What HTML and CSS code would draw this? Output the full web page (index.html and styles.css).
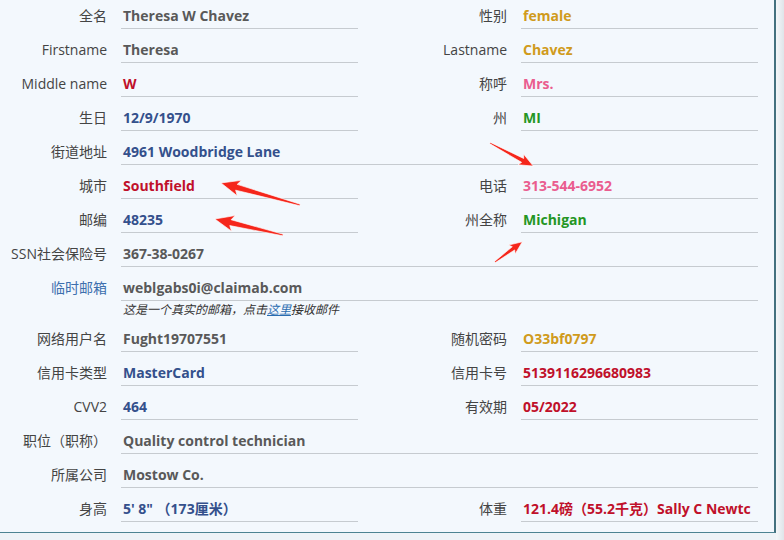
FILE: index.html
```html
<!DOCTYPE html>
<html lang="zh-CN">
<head>
<meta charset="utf-8">
<title>Profile</title>
<link rel="stylesheet" href="styles.css">
</head>
<body>
<div class="panel">
  <div class="grid">
    <div class="lbl">全名</div><div class="val grey">Theresa W Chavez</div>
    <div class="lbl">性别</div><div class="val gold">female</div>

    <div class="lbl">Firstname</div><div class="val grey">Theresa</div>
    <div class="lbl">Lastname</div><div class="val gold">Chavez</div>

    <div class="lbl">Middle name</div><div class="val red">W</div>
    <div class="lbl">称呼</div><div class="val pink">Mrs.</div>

    <div class="lbl">生日</div><div class="val blue">12/9/1970</div>
    <div class="lbl">州</div><div class="val green">MI</div>

    <div class="lbl">街道地址</div><div class="val blue wide">4961 Woodbridge Lane</div>

    <div class="lbl">城市</div><div class="val red">Southfield</div>
    <div class="lbl">电话</div><div class="val pink">313-544-6952</div>

    <div class="lbl">邮编</div><div class="val blue">48235</div>
    <div class="lbl">州全称</div><div class="val green">Michigan</div>

    <div class="lbl">SSN社会保险号</div><div class="val grey wide">367-38-0267</div>

    <div class="lbl link">临时邮箱</div><div class="val grey wide">weblgabs0i@claimab.com</div>
    <div class="note">这是一个真实的邮箱，点击<a href="#">这里</a>接收邮件</div>

    <div class="lbl">网络用户名</div><div class="val grey">Fught19707551</div>
    <div class="lbl">随机密码</div><div class="val gold">O33bf0797</div>

    <div class="lbl">信用卡类型</div><div class="val blue">MasterCard</div>
    <div class="lbl">信用卡号</div><div class="val red">5139116296680983</div>

    <div class="lbl">CVV2</div><div class="val blue">464</div>
    <div class="lbl">有效期</div><div class="val red">05/2022</div>

    <div class="lbl">职位（职称）</div><div class="val grey wide">Quality control technician</div>

    <div class="lbl">所属公司</div><div class="val grey wide">Mostow Co.</div>

    <div class="lbl">身高</div><div class="val blue">5' 8" （173厘米）</div>
    <div class="lbl">体重</div><div class="val red">121.4磅（55.2千克）Sally C Newtc</div>
  </div>
</div>
<svg class="arrows" width="784" height="540" viewBox="0 0 784 540" xmlns="http://www.w3.org/2000/svg">
  <g fill="#f5261b" stroke="#ffffff" stroke-width="0.6" stroke-linejoin="round">
    <polygon transform="translate(300 205) rotate(195.6)" points="0,-0.8 66,-3 63,-8 82,0 63,8 66,3 0,0.8"/>
    <polygon transform="translate(283 235) rotate(193.2)" points="0,-0.8 54,-3 51,-8 70,0 51,8 54,3 0,0.8"/>
    <polygon transform="translate(490 143) rotate(28.1)" points="0,-0.7 37,-2.2 35,-6 49,0 35,6 37,2.2 0,0.7"/>
    <polygon transform="translate(495 262) rotate(-36.5)" points="0,-0.7 23,-2 21,-5.5 34,0 21,5.5 23,2 0,0.7"/>
  </g>
</svg>
</body>
</html>
```

FILE: styles.css
```css
html, body {
  margin: 0;
  padding: 0;
}

body {
  position: relative;
  width: 784px;
  height: 540px;
  overflow: hidden;
  background: linear-gradient(to right, #eef3f7 0, #eef3f7 776px, #f4f7f9 776px, #dfe5e9 784px);
  font-family: "Open Sans", "Noto Sans CJK SC", sans-serif;
}

.panel {
  width: 774px;
  margin-top: -5px;
  padding-bottom: 10px;
  background: #f3f8fd;
  border-right: 2px solid #44717f;
  border-bottom: 1px solid #4d8392;
}

.grid {
  display: grid;
  grid-template-columns: 121px 237px 163px 237px;
}

.lbl {
  height: 34px;
  box-sizing: border-box;
  padding: 0 14px 3px 0;
  display: flex;
  align-items: flex-end;
  justify-content: flex-end;
  font-size: 14px;
  line-height: 20px;
  color: #444;
  white-space: nowrap;
}

.lbl.link {
  color: #3d6fae;
}

.val {
  height: 34px;
  box-sizing: border-box;
  padding: 0 0 2px 2px;
  display: flex;
  align-items: flex-end;
  border-bottom: 1px solid #c6cbd0;
  font-size: 14px;
  font-weight: 700;
  line-height: 20px;
  white-space: nowrap;
  overflow: hidden;
}

.val.wide {
  grid-column: 2 / 5;
}

.note {
  grid-column: 2 / 5;
  height: 17px;
  padding-left: 2px;
  font-size: 12px;
  line-height: 17px;
  font-style: italic;
  color: #333;
}

.note a {
  color: #2a6cb0;
  text-decoration: underline;
}

.grey { color: #595959; }
.gold { color: #d09b1c; }
.red { color: #c0102a; }
.pink { color: #ea5d8f; }
.blue { color: #34508c; }
.green { color: #249624; }

.arrows {
  position: absolute;
  top: 0;
  left: 0;
  pointer-events: none;
}
```
